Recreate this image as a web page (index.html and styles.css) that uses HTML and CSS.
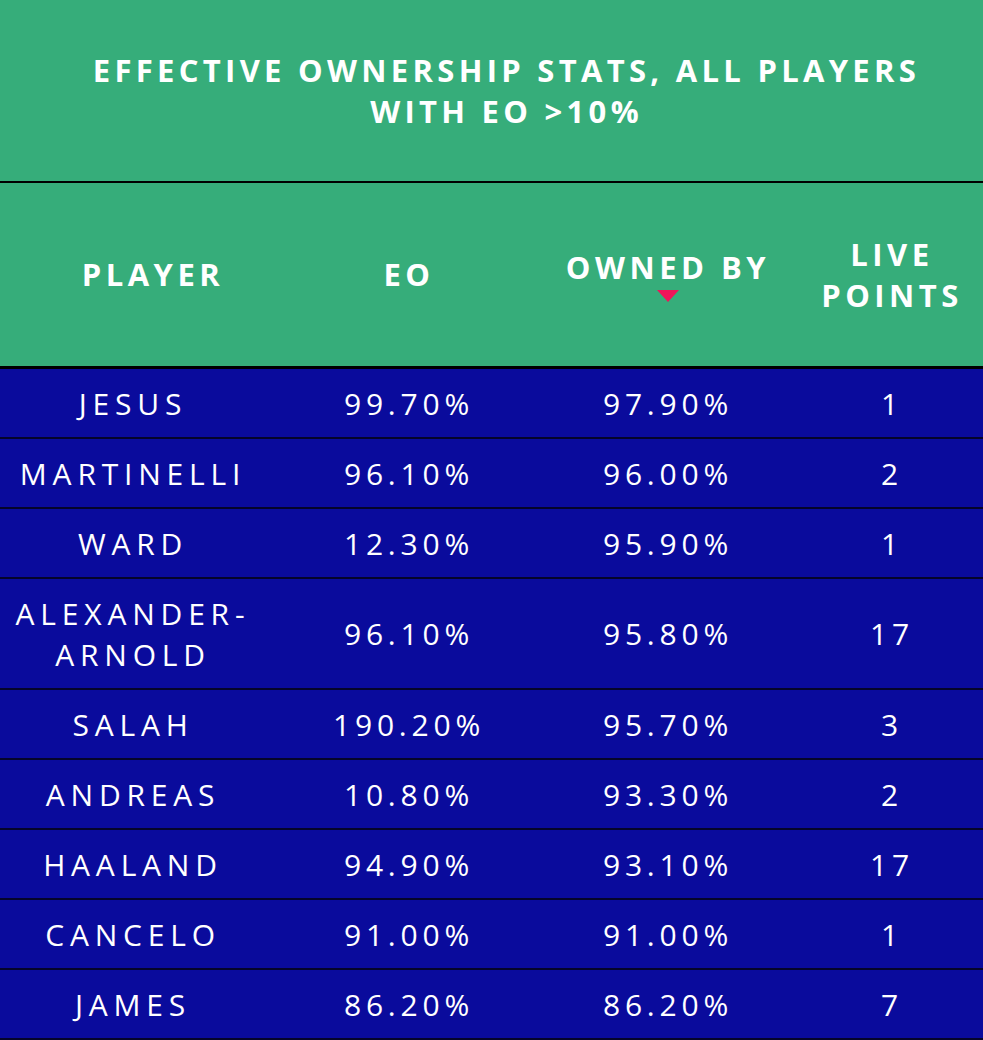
FILE: index.html
```html
<!DOCTYPE html>
<html lang="en">
<head>
<meta charset="utf-8">
<title>Effective Ownership Stats</title>
<link rel="stylesheet" href="styles.css">
</head>
<body>
<div class="page">
  <header class="title-bar">
    <h1 class="title">EFFECTIVE OWNERSHIP STATS, ALL PLAYERS<br>WITH EO &gt;10%</h1>
  </header>
  <table class="eo-table">
    <colgroup>
      <col class="col-player">
      <col class="col-eo">
      <col class="col-owned">
      <col class="col-live">
    </colgroup>
    <thead>
      <tr>
        <th class="th-player">PLAYER</th>
        <th>EO</th>
        <th class="th-sorted">OWNED BY<span class="sort-arrow"></span></th>
        <th>LIVE<br>POINTS</th>
      </tr>
    </thead>
    <tbody>
      <tr><td class="name">JESUS</td><td>99.70%</td><td>97.90%</td><td>1</td></tr>
      <tr><td class="name">MARTINELLI</td><td>96.10%</td><td>96.00%</td><td>2</td></tr>
      <tr><td class="name">WARD</td><td>12.30%</td><td>95.90%</td><td>1</td></tr>
      <tr><td class="name">ALEXANDER-<br>ARNOLD</td><td>96.10%</td><td>95.80%</td><td>17</td></tr>
      <tr><td class="name">SALAH</td><td>190.20%</td><td>95.70%</td><td>3</td></tr>
      <tr><td class="name">ANDREAS</td><td>10.80%</td><td>93.30%</td><td>2</td></tr>
      <tr><td class="name">HAALAND</td><td>94.90%</td><td>93.10%</td><td>17</td></tr>
      <tr><td class="name">CANCELO</td><td>91.00%</td><td>91.00%</td><td>1</td></tr>
      <tr><td class="name">JAMES</td><td>86.20%</td><td>86.20%</td><td>7</td></tr>
      <tr><td class="name">&nbsp;</td><td></td><td></td><td></td></tr>
    </tbody>
  </table>
</div>
</body>
</html>
```

FILE: styles.css
```css
html, body {
  margin: 0;
  padding: 0;
}
body {
  background: #0a0b9c;
  overflow: hidden;
  font-family: "Open Sans", "Liberation Sans", sans-serif;
  color: #ffffff;
}
.page {
  width: 1000px;
}
.title-bar {
  background: #36ad7a;
  height: 183px;
  display: flex;
  align-items: center;
  justify-content: center;
  border-bottom: 2px solid #000;
  width: 983px;
  padding-left: 30px;
  box-sizing: border-box;
}
.title {
  margin: 0;
  font-size: 31px;
  font-weight: 700;
  letter-spacing: 4.3px;
  line-height: 41px;
  text-align: center;
  white-space: nowrap;
}
.eo-table {
  width: 1000px;
  border-collapse: collapse;
  table-layout: fixed;
}
.col-player { width: 266px; }
.col-eo { width: 286px; }
.col-owned { width: 232px; }
.col-live { width: 216px; }
.eo-table th {
  background: #36ad7a;
  height: 183px;
  padding: 0;
  font-size: 31px;
  font-weight: 700;
  letter-spacing: 4.5px;
  line-height: 41px;
  text-align: center;
  vertical-align: middle;
  border-bottom: 3px solid #000;
  white-space: nowrap;
}
.eo-table th.th-player {
  padding-left: 40px;
}
.sort-arrow {
  display: block;
  width: 0;
  height: 0;
  margin: 2px auto 0;
  border-left: 11px solid transparent;
  border-right: 11px solid transparent;
  border-top: 12px solid #f0145a;
}
.eo-table td {
  padding: 13.5px 0;
  font-size: 30px;
  font-weight: 500;
  letter-spacing: 4.8px;
  line-height: 41px;
  text-align: center;
  vertical-align: middle;
  border-bottom: 2px solid #05052a;
  white-space: nowrap;
}
.eo-table td.name {
  letter-spacing: 5.8px;
}
```
